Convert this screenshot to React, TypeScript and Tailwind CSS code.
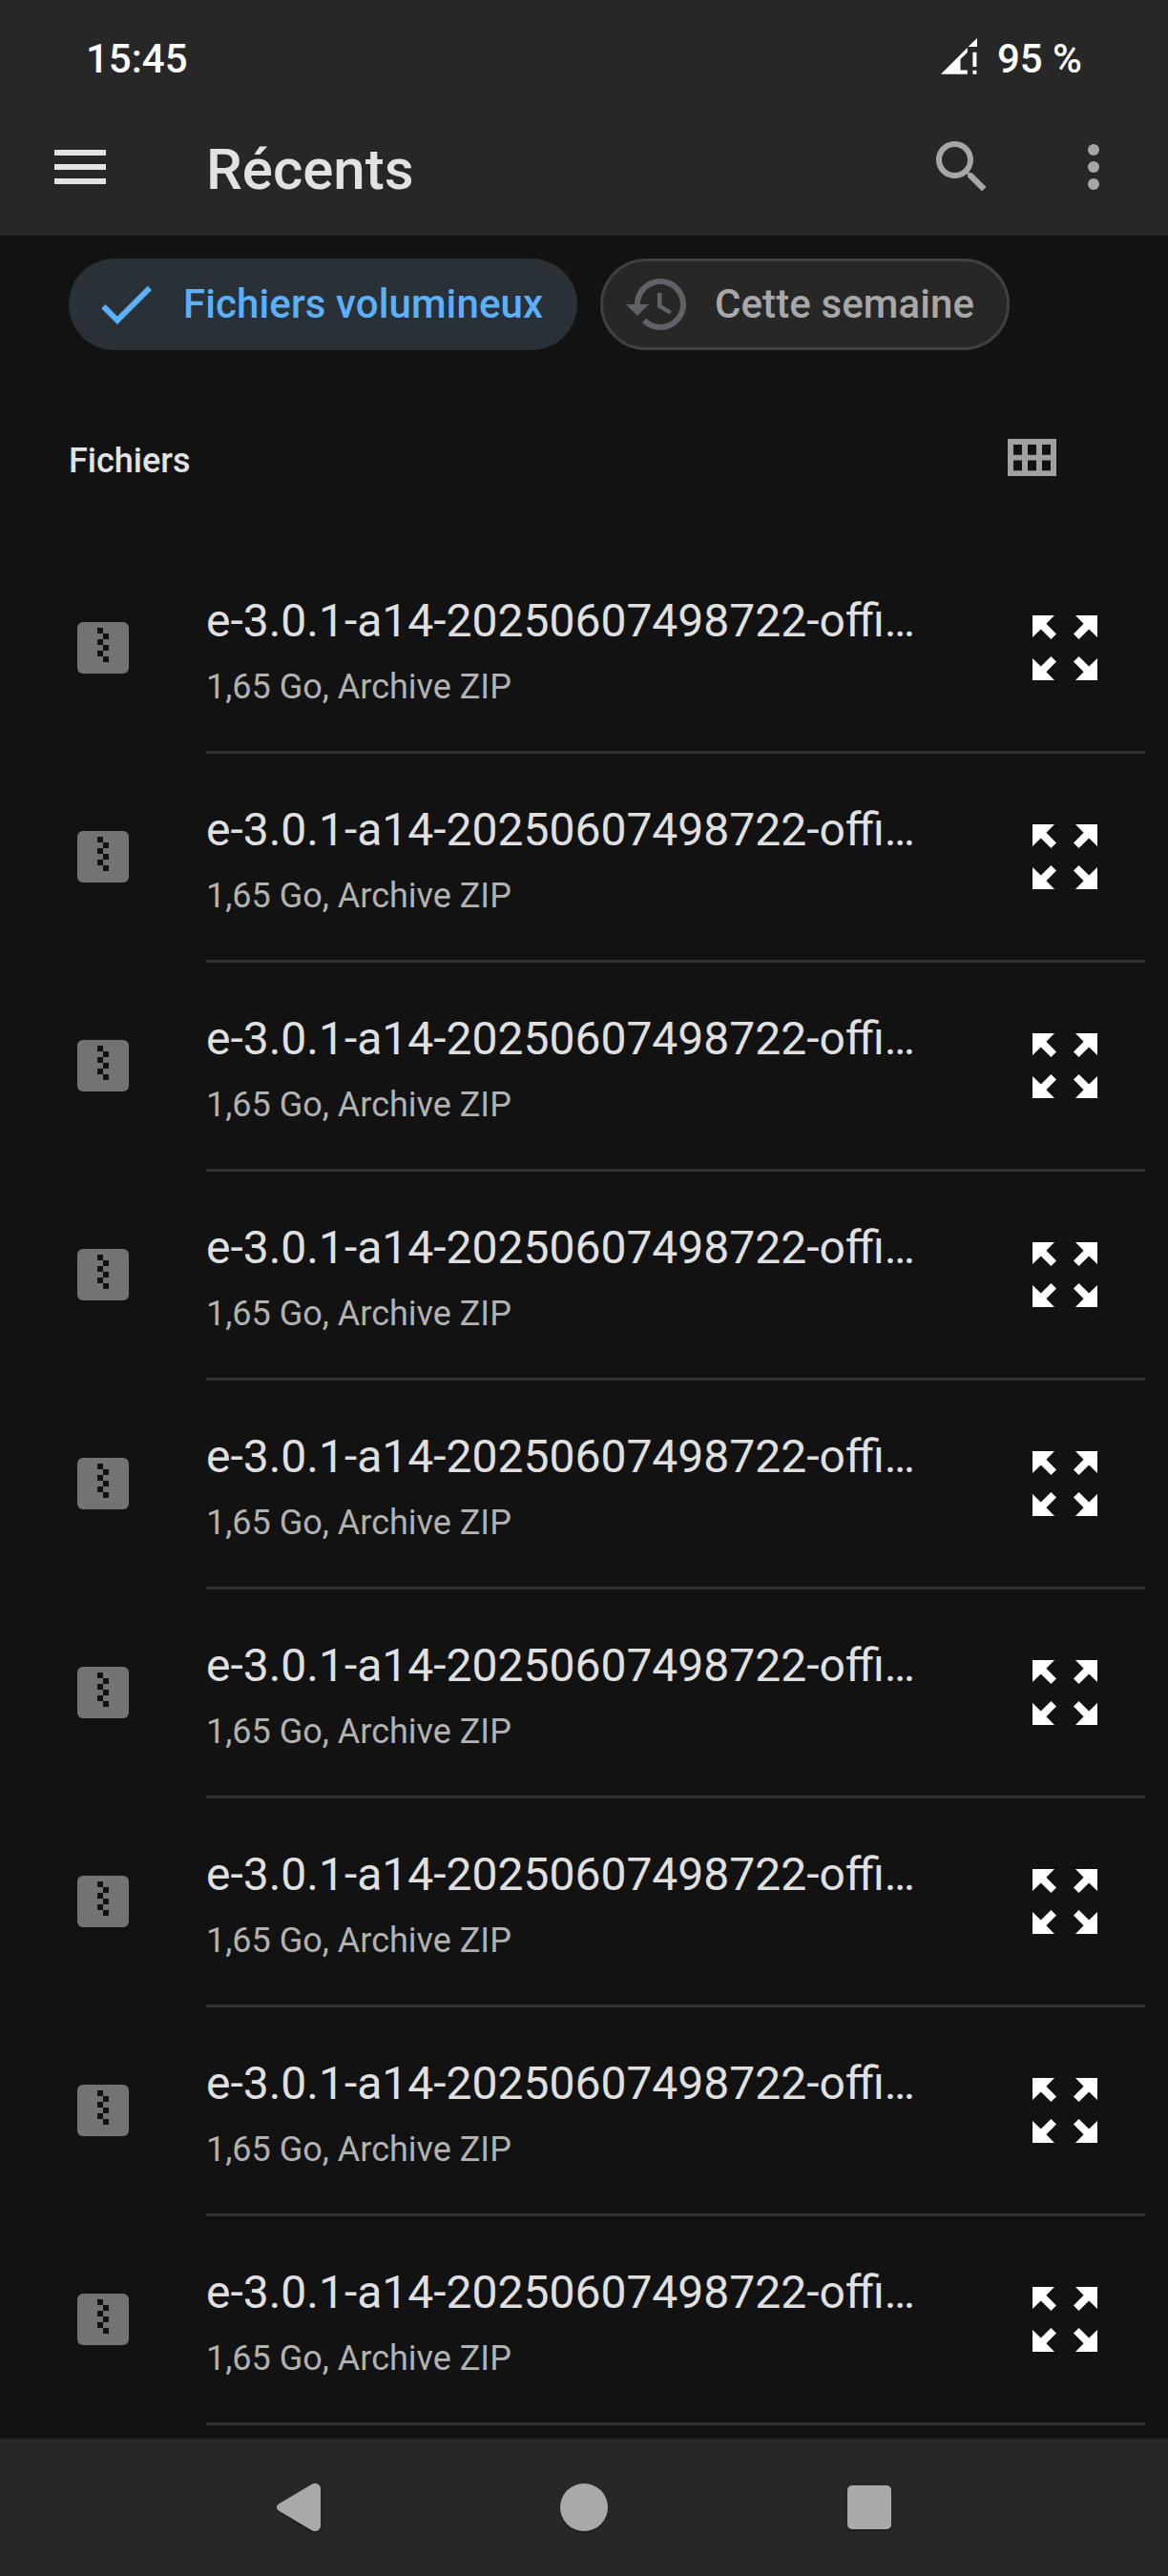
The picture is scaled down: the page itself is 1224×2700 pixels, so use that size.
import type { ReactNode } from "react"

interface FileItem {
  id: number
  name: string
  details: string
}

const files: FileItem[] = Array.from({ length: 9 }, (_, id) => ({
  id,
  name: "e-3.0.1-a14-20250607498722-offi…",
  details: "1,65 Go, Archive ZIP",
}))

interface IconProps {
  className?: string
  children: ReactNode
}

// 24dp material icon
function Icon({ className, children }: IconProps) {
  return (
    <svg viewBox="0 0 24 24" fill="currentColor" className={`size-[72px] shrink-0 ${className ?? ""}`}>
      {children}
    </svg>
  )
}

function StatusBar() {
  return (
    <div className="flex h-[91px] items-start justify-between pt-[32px] pr-[90px] pl-[90px] text-[42px] leading-[60px] font-medium text-white">
      <span>15:45</span>
      <div className="flex items-start gap-[21px]">
        <svg viewBox="0 0 38 38" fill="currentColor" className="mt-[8px] size-[38px]">
          <path d="M0 37.7 L27.8 10 V15 L20.5 22 V33.4 H27.8 V37.7Z" />
          <path d="M38 0 V9 H28.5Z" />
          <path d="M33.4 14.8h4v15.2h-4zM33.4 33.7h4v4h-4z" />
        </svg>
        <span>95 %</span>
      </div>
    </div>
  )
}

function Toolbar() {
  return (
    <div className="flex h-[156px] items-start pr-[42px] pl-[48px] text-[#a6a6a6]">
      <button className="mt-[48px] text-[#e2e2e2]">
        <Icon>
          <path d="M3 18h18v-2H3v2zm0-5h18v-2H3v2zm0-7v2h18V6H3z" />
        </Icon>
      </button>
      <h1 className="mt-[51px] ml-[96px] flex-1 text-[60px] leading-[72px] font-medium text-[#e2e2e2]">Récents</h1>
      <button className="mt-[48px]">
        <Icon>
          <path d="M15.5 14h-.79l-.28-.27C15.41 12.59 16 11.11 16 9.5 16 5.91 13.09 3 9.5 3S3 5.91 3 9.5 5.91 16 9.5 16c1.61 0 3.09-.59 4.23-1.57l.27.28v.79l5 4.99L20.49 19l-4.99-5zm-6 0C7.01 14 5 11.99 5 9.5S7.01 5 9.5 5 14 7.01 14 9.5 11.99 14 9.5 14z" />
        </Icon>
      </button>
      <button className="mt-[48px] ml-[66px]">
        <Icon>
          <circle cx="12" cy="6" r="2" />
          <circle cx="12" cy="12" r="2" />
          <circle cx="12" cy="18" r="2" />
        </Icon>
      </button>
    </div>
  )
}

function FilterChips() {
  return (
    <div className="flex gap-[24px] pt-[24px] pl-[72px] text-[42px] leading-[60px] font-medium tracking-[0.1px]">
      <button className="flex h-[96px] w-[533px] items-center rounded-full bg-[#293036] pl-[24px] whitespace-nowrap text-[#5bb0ff]">
        <Icon>
          <path d="M9 16.17L4.83 12l-1.42 1.41L9 19 21 7l-1.41-1.41z" />
        </Icon>
        <span className="ml-[24px]">Fichiers volumineux</span>
      </button>
      <button className="flex h-[96px] w-[429px] items-center rounded-full border-[3px] border-[#404040] bg-[#272727] pl-[21px] whitespace-nowrap text-[#a8a8a8]">
        <Icon className="text-[#5f6368]">
          <path d="M13 3c-4.97 0-9 4.03-9 9H1l3.89 3.89.07.14L9 12H6c0-3.87 3.13-7 7-7s7 3.13 7 7-3.13 7-7 7c-1.93 0-3.68-.79-4.94-2.06l-1.42 1.42C8.27 19.99 10.51 21 13 21c4.97 0 9-4.03 9-9s-4.03-9-9-9zm-1 5v5l4.28 2.54.72-1.21-3.5-2.08V8H12z" />
        </Icon>
        <span className="ml-[24px]">Cette semaine</span>
      </button>
    </div>
  )
}

function SectionHeader() {
  return (
    <div className="mt-[92px] flex h-[112px] items-start justify-between pr-[117px] pl-[72px]">
      <h2 className="text-[36px] leading-[48px] font-medium text-[#e2e2e2]">Fichiers</h2>
      <svg viewBox="0 0 17 13" className="mt-px h-[39px] w-[51px] text-[#a0a0a0]" fill="currentColor">
        <path
          fillRule="evenodd"
          d="M0 0h17v13H0zM2 2v3.6h3V2zM7 2v3.6h3V2zM12 2v3.6h3V2zM2 7.5v3.6h3V7.5zM7 7.5v3.6h3V7.5zM12 7.5v3.6h3V7.5z"
        />
      </svg>
    </div>
  )
}

function ZipIcon() {
  return (
    <svg viewBox="0 0 54 54" className="mt-[81px] size-[54px] shrink-0">
      <rect width="54" height="54" rx="6" fill="#737373" />
      <path d="M21 6h6v6h-6zM27 12h6v6h-6zM21 18h6v6h-6zM27 24h6v6h-6zM21 30h6v6h-6zM27 36h6v6h-6z" fill="#121212" />
    </svg>
  )
}

function ExpandIcon() {
  return (
    <svg viewBox="0 0 68 68" className="mt-[74px] mr-[50px] size-[68px] shrink-0" fill="#fff">
      <path d="M0 0H23L14.4 8.8 25 19.4 19.4 25 8.8 14.4 0 23z" />
      <path d="M68 0V23L59.2 14.4 48.6 25 43 19.4 53.6 8.8 45 0z" />
      <path d="M0 68V45L8.8 53.6 19.4 43 25 48.6 14.4 59.2 23 68z" />
      <path d="M68 68H45L53.6 59.2 43 48.6 48.6 43 59.2 53.6 68 45z" />
    </svg>
  )
}

function FileRow({ file }: { file: FileItem }) {
  return (
    <li className="flex h-[219px] pr-[24px] pl-[81px]">
      <ZipIcon />
      <div className="ml-[81px] flex flex-1 justify-between border-b-[3px] border-[#303030]">
        <div className="pt-[52px] whitespace-nowrap">
          <p className="text-[48px] leading-[56px] text-[#e0e0e0]">{file.name}</p>
          <p className="mt-[20px] text-[36px] leading-[42px] text-[#b2b2b2]">{file.details}</p>
        </div>
        <ExpandIcon />
      </div>
    </li>
  )
}

function NavigationBar() {
  return (
    <nav className="flex h-[144px] shrink-0 items-start bg-[#272727] pl-[290px] text-[#a9a9a9]">
      <svg
        viewBox="0 0 46 50"
        className="mt-[47px] h-[50px] w-[46px] drop-shadow-[0_2px_1px_rgba(0,0,0,0.2)]"
        fill="currentColor"
      >
        <path d="M36.5 1A6 6 0 0 1 46 6V44A6 6 0 0 1 36.5 49L2 28.5A4 4 0 0 1 2 21.5Z" />
      </svg>
      <div className="mt-[47px] ml-[251px] size-[50px] rounded-full bg-[#a9a9a9] shadow-[0_2px_2px_rgba(0,0,0,0.2)]" />
      <div className="mt-[49px] ml-[251px] size-[46px] rounded-[5px] bg-[#a9a9a9] shadow-[0_2px_2px_rgba(0,0,0,0.2)]" />
    </nav>
  )
}

export default function App() {
  return (
    <div className="flex h-[2700px] w-[1224px] flex-col overflow-hidden bg-[#121212] font-[Roboto,sans-serif]">
      <header className="shrink-0 bg-[#272727]">
        <StatusBar />
        <Toolbar />
      </header>
      <main className="flex-1 overflow-hidden">
        <FilterChips />
        <SectionHeader />
        <ul>
          {files.map((file) => (
            <FileRow key={file.id} file={file} />
          ))}
        </ul>
      </main>
      <NavigationBar />
    </div>
  )
}
